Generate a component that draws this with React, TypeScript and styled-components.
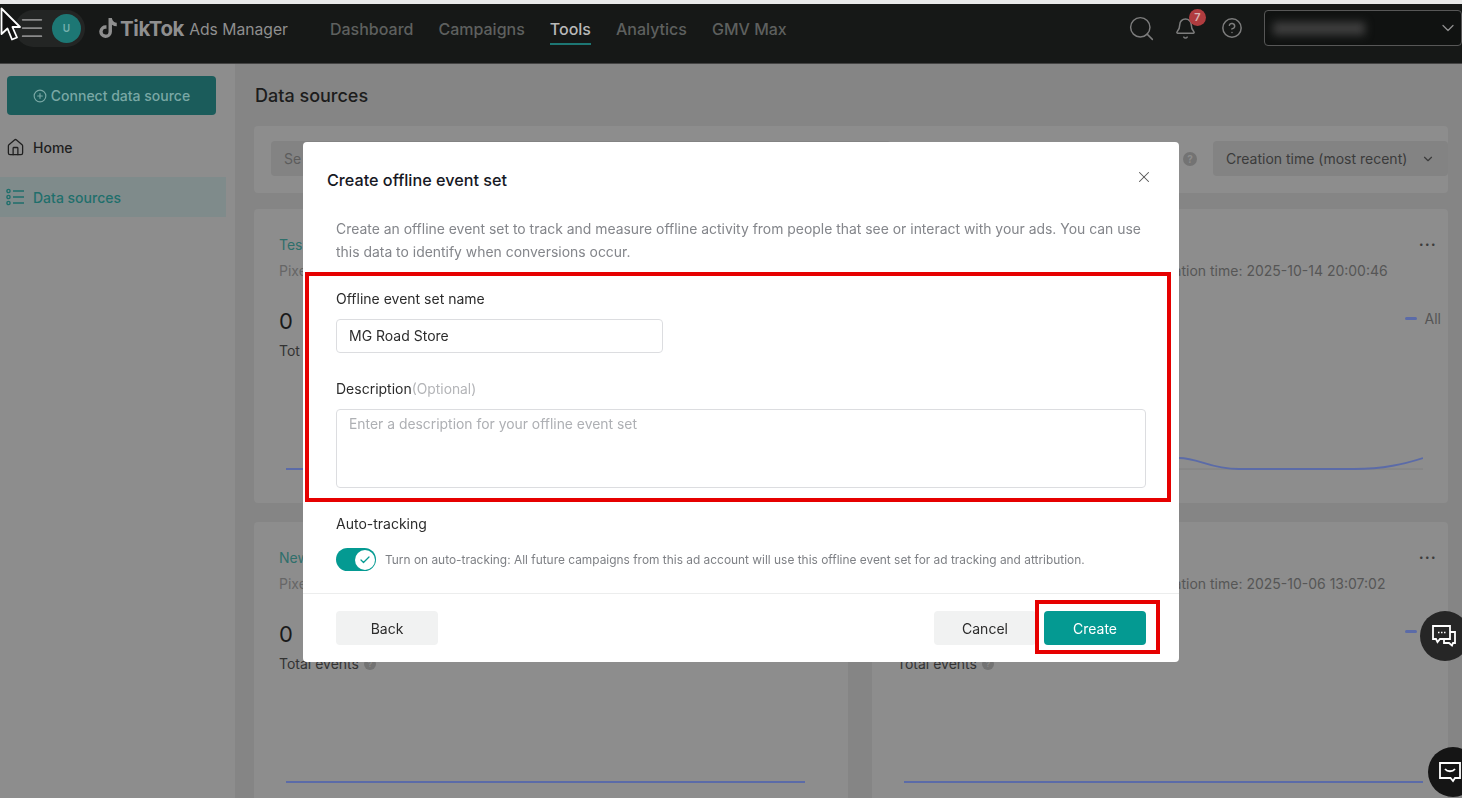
import React from 'react';
import styled, { createGlobalStyle } from 'styled-components';
import { Bell, ChevronDown, CircleHelp, CirclePlus, Check, House, Menu, Search, X } from 'lucide-react';
import { FaTiktok } from 'react-icons/fa6';

const GlobalStyle = createGlobalStyle`
  html, body {
    margin: 0;
    padding: 0;
    height: 100%;
    overflow: hidden;
    background: #e9e9e9;
    font-family: Inter, "Liberation Sans", sans-serif;
  }
  * { box-sizing: border-box; }
`;

const Page = styled.div`
  height: 798px;
  width: 1462px;
  padding-top: 4px;
  overflow: hidden;
  display: flex;
  flex-direction: column;
`;

const TopBar = styled.header`
  height: 60px;
  flex: none;
  background: #161817;
  border-bottom: 1px solid #444;
  display: flex;
  align-items: center;
  padding-left: 15px;
  padding-bottom: 11px;
`;

const MenuPill = styled.div`
  width: 70px;
  height: 37px;
  border-radius: 19px;
  background: #232524;
  color: #8a8a8a;
  display: flex;
  align-items: center;
  padding-left: 3px;
  gap: 6px;
`;

const Avatar = styled.span`
  width: 29px;
  height: 29px;
  border-radius: 50%;
  background: #1d7774;
  color: #76b0ad;
  font-size: 10px;
  font-weight: 600;
  display: flex;
  align-items: center;
  justify-content: center;
`;

const Logo = styled.div`
  display: flex;
  align-items: center;
  margin-left: 13px;
  color: #8f8f8f;
`;

const LogoWord = styled.span`
  font-size: 20.5px;
  font-weight: 700;
  letter-spacing: -0.4px;
  margin-left: 2px;
`;

const LogoSub = styled.span`
  font-size: 15.7px;
  margin-left: 5px;
  margin-top: 3px;
`;

const Nav = styled.nav`
  display: flex;
  gap: 25px;
  margin-left: 42px;
`;

const NavItem = styled.a<{ $active?: boolean }>`
  font-size: 16px;
  font-weight: 500;
  line-height: 24px;
  padding-top: 6px;
  padding-bottom: 2px;
  color: ${p => (p.$active ? '#b9b9b9' : '#5e605f')};
  border-bottom: 2px solid ${p => (p.$active ? '#1d7774' : 'transparent')};
`;

const TopActions = styled.div`
  margin-left: auto;
  display: flex;
  align-items: center;
  color: #7d7d7d;
`;

const BellWrap = styled.div`
  position: relative;
  display: flex;
  margin-left: 18px;
  margin-right: 24px;
`;

const Badge = styled.span`
  position: absolute;
  top: -8px;
  left: 15px;
  width: 17px;
  height: 17px;
  border-radius: 50%;
  background: #b03c3f;
  color: #d8b5b5;
  font-size: 11px;
  font-weight: 600;
  display: flex;
  align-items: center;
  justify-content: center;
`;

const Account = styled.div`
  width: 198px;
  height: 36px;
  margin-left: 21px;
  border: 1px solid #575757;
  border-radius: 4px;
  background: #101211;
  display: flex;
  align-items: center;
  padding-left: 8px;
  padding-right: 3px;
  justify-content: space-between;
  color: #8f8f8f;
`;

const BlurredName = styled.span`
  width: 92px;
  height: 13px;
  background: #3f3f3f;
  filter: blur(4px);
`;

const Body = styled.div`
  flex: 1;
  display: flex;
  min-height: 0;
`;

const Sidebar = styled.aside`
  width: 235px;
  flex: none;
  background: #8d8d8d;
  padding-top: 12px;
`;

const ConnectButton = styled.button`
  width: 209px;
  height: 39px;
  margin-left: 7px;
  border: 0;
  border-radius: 4px;
  background: #1b5c5b;
  color: #7aa8a5;
  font: 500 14px Inter, "Liberation Sans", sans-serif;
  display: flex;
  align-items: center;
  justify-content: center;
  gap: 4px;
`;

const SideItem = styled.div<{ $active?: boolean }>`
  width: 226px;
  height: 40px;
  display: flex;
  align-items: center;
  gap: 8px;
  padding-left: 6px;
  font-size: 14px;
  font-weight: 500;
  color: ${p => (p.$active ? '#1f6f6c' : '#1f1f1f')};
  background: ${p => (p.$active ? '#7f8b8b' : 'transparent')};
  margin-top: ${p => (p.$active ? '0' : '12px')};
  margin-bottom: ${p => (p.$active ? '0' : '10px')};
`;

const Main = styled.main`
  flex: 1;
  background: #858585;
  padding: 20px 14px 0 19px;
  overflow: hidden;
`;

const PageTitle = styled.h1`
  margin: 0 0 18px 1px;
  font-size: 18px;
  line-height: 24px;
  font-weight: 500;
  color: #1c1c1c;
`;

const FilterBar = styled.div`
  height: 67px;
  background: #8d8d8d;
  border-radius: 4px;
  padding: 15px 0 17px 17px;
  display: flex;
  align-items: center;
  margin-bottom: 16px;
`;

const SearchBox = styled.div`
  width: 620px;
  height: 35px;
  background: #838383;
  border-radius: 4px;
  font-size: 14px;
  line-height: 35px;
  padding-left: 13px;
  color: #5c5c5c;
`;

const HelpDot = styled.span<{ $size: number }>`
  width: ${p => p.$size}px;
  height: ${p => p.$size}px;
  border-radius: 50%;
  background: #737373;
  color: #8c8c8c;
  font-size: ${p => p.$size - 4}px;
  font-weight: 700;
  display: inline-flex;
  align-items: center;
  justify-content: center;
`;

const SortWrap = styled.div`
  margin-left: auto;
  display: flex;
  align-items: center;
  gap: 16px;
`;

const SortSelect = styled.div`
  width: 235px;
  height: 35px;
  background: #838383;
  border-radius: 4px;
  padding: 0 13px;
  display: flex;
  align-items: center;
  justify-content: space-between;
  font-size: 14px;
  color: #3b3b3b;
`;

const CardGrid = styled.div`
  display: grid;
  grid-template-columns: 594px 576px;
  column-gap: 24px;
  row-gap: 19px;
`;

const Card = styled.section`
  height: 294px;
  background: #8d8d8d;
  border-radius: 4px;
  padding: 25px 11px 0 25px;
`;

const CardHead = styled.div`
  display: flex;
  justify-content: space-between;
  align-items: center;
  height: 20px;
  font-size: 14px;
  color: #2f6f6b;
`;

const Dots = styled.span`
  margin-left: auto;
  color: #3c3c3c;
  font-size: 8px;
  letter-spacing: 1.5px;
`;

const Meta = styled.div`
  display: flex;
  margin-top: 7px;
  height: 20px;
  line-height: 20px;
  font-size: 14px;
  color: #565656;
`;

const MetaId = styled.span`
  width: 253px;
  color: #666;
`;

const ValueRow = styled.div`
  display: flex;
  justify-content: space-between;
  margin-top: 26px;
  height: 28px;
`;

const Value = styled.span`
  font-size: 22px;
  line-height: 28px;
  color: #1a1a1a;
`;

const Legend = styled.span`
  display: flex;
  align-items: center;
  gap: 8px;
  margin-right: -4px;
  margin-top: 1px;
  height: 20px;
  font-size: 14px;
  color: #555;
`;

const LegendDash = styled.i`
  width: 12px;
  height: 3px;
  border-radius: 2px;
  background: #5b6ba8;
`;

const TotalLabel = styled.div`
  margin-top: 6px;
  height: 20px;
  line-height: 20px;
  font-size: 14px;
  color: #333;
  display: flex;
  align-items: center;
  gap: 5px;
`;

const Chart = styled.svg`
  display: block;
  margin: 84px 0 0 7px;
  width: 519px;
  height: 30px;
`;

const Backdrop = styled.div`
  position: fixed;
  inset: 0;
  padding: 142px 0 0 303px;
`;

const Modal = styled.div`
  position: relative;
  width: 876px;
  height: 520px;
  background: #fff;
  border-radius: 4px;
  display: flex;
  flex-direction: column;
`;

const ModalHead = styled.div`
  padding: 24px 26px 0 24px;
  display: flex;
  justify-content: space-between;
  color: #555;
`;

const CloseIcon = styled(X)`
  margin-top: 2px;
`;

const ModalTitle = styled.h2`
  margin: 0;
  font-size: 16.2px;
  line-height: 28px;
  font-weight: 500;
  color: #161823;
`;

const ModalBody = styled.div`
  padding: 24px 33px 0;
  flex: 1;
`;

const Intro = styled.p`
  margin: 0 0 25px;
  font-size: 13.93px;
  line-height: 23px;
  color: #84868b;
`;

const Label = styled.div`
  font-size: 14px;
  line-height: 20px;
  color: #2c2c2c;
  margin-bottom: 10px;
`;

const Optional = styled.span`
  color: #b4b5b8;
  font-size: 13.8px;
`;

const TextField = styled.div<{ $wide?: boolean }>`
  width: ${p => (p.$wide ? '810px' : '327px')};
  height: ${p => (p.$wide ? '79px' : '34px')};
  border: 1px solid #dcdde0;
  border-radius: 4px;
  padding: ${p => (p.$wide ? '4px 12px' : '0 12px')};
  font-size: ${p => (p.$wide ? '13.9px' : '14px')};
  line-height: ${p => (p.$wide ? '20px' : '32px')};
  color: ${p => (p.$wide ? '#aeb0b4' : '#2c2c2c')};
  margin-bottom: 26px;
`;

const ToggleRow = styled.div`
  display: flex;
  align-items: center;
  gap: 9px;
  margin-top: 14px;
  font-size: 11.92px;
  color: #7e8085;
`;

const Toggle = styled.span`
  width: 40px;
  height: 23px;
  border-radius: 12px;
  background: #049a92;
  display: flex;
  align-items: center;
  justify-content: flex-end;
  padding-right: 1.5px;
`;

const ToggleKnob = styled.span`
  width: 20px;
  height: 20px;
  border-radius: 50%;
  background: #fff;
  color: #049a92;
  display: flex;
  align-items: center;
  justify-content: center;
`;

const ModalFoot = styled.div`
  border-top: 1px solid #eceded;
  padding: 17px 33px 17px;
  display: flex;
  gap: 8px;
`;

const FootButton = styled.button<{ $primary?: boolean }>`
  width: 102px;
  height: 34px;
  border: 0;
  border-radius: 4px;
  font: 400 14px Inter, "Liberation Sans", sans-serif;
  background: ${p => (p.$primary ? '#049a92' : '#f1f2f2')};
  color: ${p => (p.$primary ? '#fff' : '#2c2c2c')};
  &:first-child { margin-right: auto; }
`;

const RedBox = styled.div<{ $left: number; $top: number; $w: number; $h: number }>`
  position: absolute;
  left: ${p => p.$left}px;
  top: ${p => p.$top}px;
  width: ${p => p.$w}px;
  height: ${p => p.$h}px;
  border: 4px solid #e60000;
  pointer-events: none;
`;

const FloatButton = styled.div<{ $left: number; $top: number; $size: number; $bg: string }>`
  position: fixed;
  left: ${p => p.$left}px;
  top: ${p => p.$top}px;
  width: ${p => p.$size}px;
  height: ${p => p.$size}px;
  border-radius: 50%;
  background: ${p => p.$bg};
  color: #fff;
  display: flex;
  align-items: center;
  padding-left: 11px;
`;

const Cursor = styled.svg`
  position: fixed;
  left: 0;
  top: 7px;
`;

const ListIcon = () => (
  <svg width="19" height="18" viewBox="0 0 19 18" fill="none" stroke="#1f6f6c" strokeWidth="1.4">
    <circle cx="2.5" cy="3" r="1.6" />
    <circle cx="2.5" cy="9" r="1.6" />
    <circle cx="2.5" cy="15" r="1.6" />
    <path d="M7 3h11M7 9h11M7 15h11" />
  </svg>
);

const flatLine = 'M0 24H519';
const curveLine = 'M0 24H170C215 24 245 13 275 13C295 13 305 24 335 24H450C480 24 500 19 519 13';

// the modal hides most of the cards, only the parts left visible carry text
const cards = [
  { name: 'Tes', pixel: 'Pixe', total: 'Tot', time: '2025-10-14 20:00:46', line: curveLine },
  { name: 'New', pixel: 'Pixe', total: 'Total events', time: '2025-10-06 13:07:02', line: flatLine },
];

export default function App() {
  return (
    <>
      <GlobalStyle />
      <Page>
        <TopBar>
          <MenuPill>
            <Menu size={28} strokeWidth={1.5} />
            <Avatar>U</Avatar>
          </MenuPill>
          <Logo>
            <FaTiktok size={20} />
            <LogoWord>TikTok</LogoWord>
            <LogoSub>Ads Manager</LogoSub>
          </Logo>
          <Nav>
            <NavItem>Dashboard</NavItem>
            <NavItem>Campaigns</NavItem>
            <NavItem $active>Tools</NavItem>
            <NavItem>Analytics</NavItem>
            <NavItem>GMV Max</NavItem>
          </Nav>
          <TopActions>
            <Search size={29} strokeWidth={1.2} />
            <BellWrap>
              <Bell size={23} strokeWidth={1.6} />
              <Badge>7</Badge>
            </BellWrap>
            <CircleHelp size={22} strokeWidth={1.6} />
            <Account>
              <BlurredName />
              <ChevronDown size={20} strokeWidth={1.5} />
            </Account>
          </TopActions>
        </TopBar>
        <Body>
          <Sidebar>
            <ConnectButton>
              <CirclePlus size={14} />
              Connect data source
            </ConnectButton>
            <SideItem>
              <House size={19} strokeWidth={1.6} />
              Home
            </SideItem>
            <SideItem $active>
              <ListIcon />
              Data sources
            </SideItem>
          </Sidebar>
          <Main>
            <PageTitle>Data sources</PageTitle>
            <FilterBar>
              <SearchBox>Se</SearchBox>
              <SortWrap>
                <HelpDot $size={14}>?</HelpDot>
                <SortSelect>
                  Creation time (most recent)
                  <ChevronDown size={14} />
                </SortSelect>
              </SortWrap>
            </FilterBar>
            <CardGrid>
              {cards.map(c => (
                <React.Fragment key={c.name}>
                  <Card>
                    <CardHead>{c.name}</CardHead>
                    <Meta>
                      <MetaId>{c.pixel}</MetaId>
                    </Meta>
                    <ValueRow>
                      <Value>0</Value>
                    </ValueRow>
                    <TotalLabel>
                      {c.total}
                      {c.total === 'Total events' && <HelpDot $size={12}>?</HelpDot>}
                    </TotalLabel>
                    <Chart viewBox="0 0 519 30" fill="none">
                      <path d={flatLine} stroke="#5b6ba8" strokeWidth="1.8" />
                    </Chart>
                  </Card>
                  <Card>
                    <CardHead>
                      <Dots>•••</Dots>
                    </CardHead>
                    <Meta>
                      <MetaId />
                      <span>Creation time: {c.time}</span>
                    </Meta>
                    <ValueRow>
                      <span />
                      <Legend>
                        <LegendDash />
                        All
                      </Legend>
                    </ValueRow>
                    <TotalLabel>
                      {c.total === 'Total events' && 'Total events'}
                      {c.total === 'Total events' && <HelpDot $size={12}>?</HelpDot>}
                    </TotalLabel>
                    <Chart viewBox="0 0 519 30" fill="none">
                      <path d={flatLine} stroke="#808080" strokeWidth="1" />
                      <path d={c.line} stroke="#5b6ba8" strokeWidth="1.8" />
                    </Chart>
                  </Card>
                </React.Fragment>
              ))}
            </CardGrid>
          </Main>
        </Body>
      </Page>

      <Backdrop>
        <Modal>
          <ModalHead>
            <ModalTitle>Create offline event set</ModalTitle>
            <CloseIcon size={18} strokeWidth={1.4} />
          </ModalHead>
          <ModalBody>
            <Intro>
              Create an offline event set to track and measure offline activity from people that see or interact with
              your ads. You can use this data to identify when conversions occur.
            </Intro>
            <Label>Offline event set name</Label>
            <TextField>MG Road Store</TextField>
            <Label>
              Description<Optional>(Optional)</Optional>
            </Label>
            <TextField $wide>Enter a description for your offline event set</TextField>
            <Label>Auto-tracking</Label>
            <ToggleRow>
              <Toggle>
                <ToggleKnob>
                  <Check size={12} strokeWidth={2.5} />
                </ToggleKnob>
              </Toggle>
              Turn on auto-tracking: All future campaigns from this ad account will use this offline event set for ad
              tracking and attribution.
            </ToggleRow>
          </ModalBody>
          <ModalFoot>
            <FootButton>Back</FootButton>
            <FootButton>Cancel</FootButton>
            <FootButton $primary>Create</FootButton>
          </ModalFoot>
          <RedBox $left={2} $top={130} $w={866} $h={230} />
          <RedBox $left={732} $top={458} $w={125} $h={54} />
        </Modal>
      </Backdrop>

      <FloatButton $left={1420} $top={611} $size={50} $bg="#262626">
        <svg width="26" height="26" viewBox="0 0 26 26" fill="none" stroke="#fff" strokeWidth="1.8">
          <path d="M2 3h17v13H9l-2.5 3L5 16H2z" />
          <path d="M19 9h5v11h-2l-1 2.5-3-2.5h-5v-4" />
          <path d="M7 9.5h1.5M10 9.5h1.5M13 9.5h1.5" strokeWidth="1.6" />
        </svg>
      </FloatButton>
      <FloatButton $left={1428} $top={747} $size={50} $bg="#151515">
        <svg width="22" height="24" viewBox="0 0 22 24" fill="none" stroke="#fff" strokeWidth="1.8">
          <path d="M1 3h20v15h-5l-2 3-2.5-3H1z" />
          <path d="M6 9c2.5 3 7.5 3 10 0" />
        </svg>
      </FloatButton>

      <Cursor width="22" height="36" viewBox="0 0 22 36">
        <path d="M1.5 1.5V27l6-5.5 4.5 11 5-2-4.6-10.5H20z" fill="#111" stroke="#fff" strokeWidth="1.8" strokeLinejoin="round" />
      </Cursor>
    </>
  );
}
